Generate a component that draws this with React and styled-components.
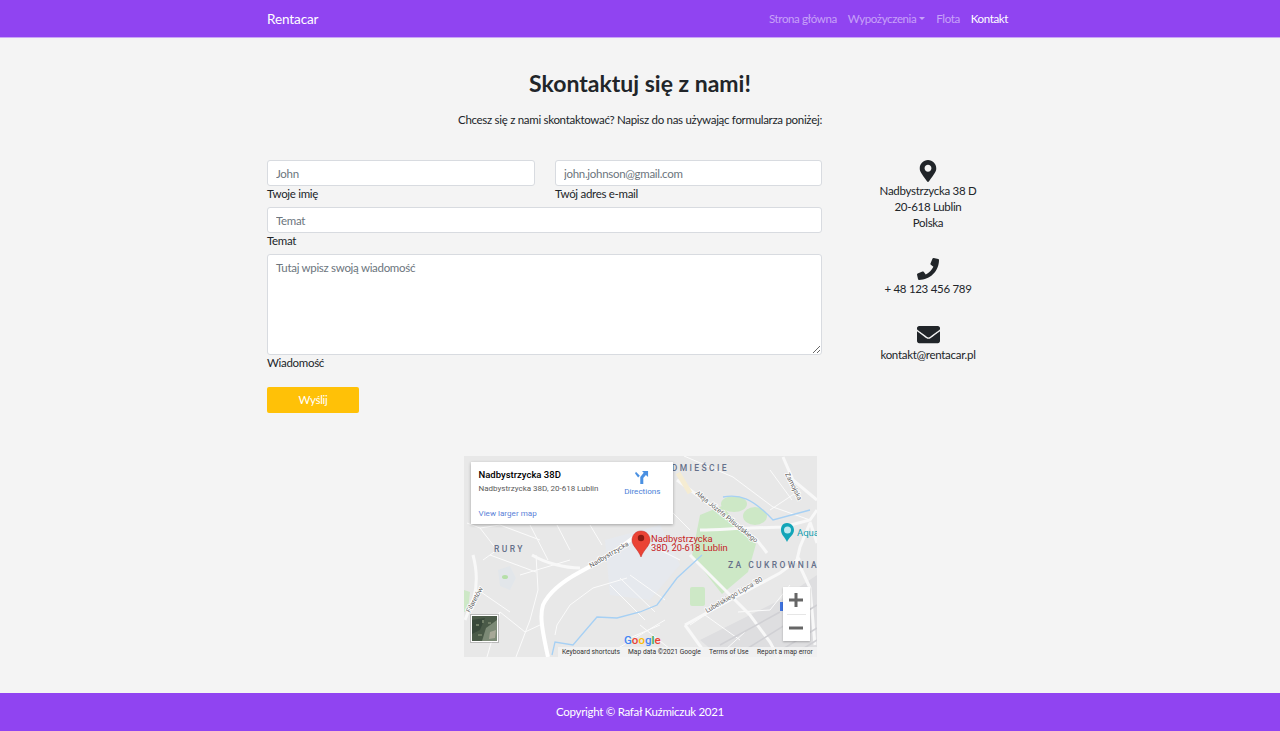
import React from 'react';
import styled, { createGlobalStyle } from 'styled-components';
import { FaMapMarkerAlt, FaPhone, FaEnvelope } from 'react-icons/fa';

const purple = '#9044f1';

const Global = createGlobalStyle`
  * { box-sizing: border-box; }
  body {
    margin: 0;
    background: #f4f4f4;
    color: #212529;
    font-family: Lato, "Open Sans", sans-serif;
    font-size: 11.5px;
    letter-spacing: -0.3px;
    line-height: 16px;
  }
`;

const MapDrawing = () => (
  <svg width="353" height="201" viewBox="464 456 353 201" style={{ display: 'block', letterSpacing: 0 }}>
    <rect x="464" y="456" width="353" height="201" fill="#e8e8e8" />
    <path d="M605 540 L660 525 L680 565 L650 600 L610 595 Z" fill="#e6e9ee" />
    <path d="M700 640 L780 600 L817 575 L817 657 L720 657 Z" fill="#dedee0" />
    <path d="M700 515 L722 506 L756 544 L748 572 L722 594 L692 556 Z" fill="#cde8c6" />
    <ellipse cx="734" cy="504" rx="13" ry="8" fill="#cde8c6" />
    <ellipse cx="755" cy="516" rx="12" ry="9" fill="#cde8c6" />
    <rect x="690" y="587" width="15" height="19" rx="2" fill="#cde8c6" />
    <path d="M464 590 L470 592 L468 610 L464 612 Z" fill="#cde8c6" />
    <path d="M498 570 L510 566 L516 578 L510 590 L500 586 Z" fill="#e2e6ea" />
    <ellipse cx="505" cy="577" rx="3" ry="2" fill="#b5dfa8" />

    <g fill="none" stroke="#fbfbfb" strokeWidth="1">
      <path d="M467 523 L480 528 L497 550 L483 560 M480 528 L500 525 L540 540 M557 525 L570 550 M530 525 L548 560 M590 525 L602 545" />
      <path d="M490 555 L536 572 M520 575 L570 560 M536 555 L538 590 L530 620 L516 657 M487 657 L500 612 L525 632 L540 625" />
      <path d="M478 590 L510 612 M500 612 L485 630 M627 578 L593 588 L570 605 L557 625 L555 635" />
      <path d="M610 585 L645 620 M620 578 L655 612 M630 575 L665 600 M640 625 L680 657 M625 640 L660 625 M615 650 L665 620" />
      <path d="M733 477 L773 507 L810 520 M690 625 L705 615 L740 640 M725 650 L745 632 M738 612 L770 610 L790 585" />
      <path d="M770 470 L792 500 M800 490 L770 510 M684 456 L733 477 M660 500 L690 530 M640 540 L680 560" />
    </g>
    <g fill="none" stroke="#f8f8f8" strokeWidth="3">
      <path d="M473 555 C477 570 478 582 474 597 L465 620" />
      <path d="M532 555 C545 563 565 568 580 568" />
      <path d="M685 625 L730 600 L780 573 L800 558" />
      <path d="M677 480 L757 540 L767 553" />
      <path d="M690 555 L737 602 L750 615 L770 642 L778 657" />
      <path d="M685 625 L703 650" />
      <path d="M700 530 C720 530 735 528 750 528 L783 527 L810 520 L817 510" />
      <path d="M783 457 L793 480 L817 500" />
      <path d="M810 523 L800 547 L797 560 L810 588 L815 645 M810 522 L817 543" />
    </g>
    <path d="M678 473 L690 493" fill="none" stroke="#f5ecd2" strokeWidth="5" />
    <path d="M637 535 L607 557 L580 572 C565 580 550 590 543 605 C540 615 541 625 548 657" fill="none" stroke="#fff" strokeWidth="4" />
    <path d="M720 645 L780 612 M745 650 L817 605 M770 657 L817 628 M790 657 L817 640" fill="none" stroke="#d0d0d4" strokeWidth="1.5" />
    <path d="M552 655 L555 642 L573 645 L597 617 L617 618 L640 612 L657 605 L677 578 L702 555 M723 497 C740 494 752 498 773 520 L810 510"
      fill="none" stroke="#a6d0f4" strokeWidth="1.3" />
    <rect x="780" y="602" width="4" height="9" fill="#3f73e0" />

    <g fontFamily="Roboto, sans-serif" fill="#65708a" fontWeight="500">
      <text x="494" y="552" fontSize="8.5" letterSpacing="2.4">RURY</text>
      <text x="728" y="568" fontSize="8.5" letterSpacing="2.4">ZA CUKROWNIA</text>
      <text x="729" y="471" fontSize="8.5" letterSpacing="2.4" textAnchor="end">ŚRÓDMIEŚCIE</text>
    </g>
    <g fontFamily="Roboto, sans-serif" fontSize="6.8" fill="#5f5f5f" stroke="#fff" strokeWidth="1.6" paintOrder="stroke">
      <text transform="translate(591 568) rotate(-31)">Nadbystrzycka</text>
      <text transform="translate(695 494) rotate(39)">Aleja Józefa Piłsudskiego</text>
      <text transform="translate(785 474) rotate(64)">Zamojska</text>
      <text transform="translate(707 613) rotate(-30)">Lubelskiego Lipca '80</text>
      <text transform="translate(470 613) rotate(-62)">Filaretów</text>
    </g>

    <path d="M641 531 C635 531 632 536 632 540 C632 546 638 549 641 557 C644 549 650 546 650 540 C650 536 647 531 641 531 Z" fill="#ea4335" stroke="#c5221f" strokeWidth=".5" />
    <circle cx="641" cy="538" r="3.2" fill="#8a1a12" />
    <g fontFamily="Roboto, sans-serif" fontSize="9.4" fill="#c5221f">
      <text x="651" y="541.500">Nadbystrzycka</text>
      <text x="651" y="551">38D, 20-618 Lublin</text>
    </g>

    <path d="M787 523 C782 523 781 527 781 530 C781 535 785 537 787 542 C789 537 794 535 794 530 C794 527 792 523 787 523 Z" fill="#12a5b8" />
    <circle cx="787.500" cy="530" r="3.500" fill="#bfeaf0" />
    <text x="797" y="536" fontFamily="Roboto, sans-serif" fontSize="9.500" fill="#129eb0">Aqua</text>

    <rect x="470" y="614" width="29" height="29" fill="#000" fillOpacity=".2" />
    <rect x="471" y="615" width="27" height="27" fill="#fff" />
    <rect x="472" y="616" width="25" height="25" fill="#4a5a48" />
    <path d="M472 620 L485 618 L480 630 L472 634 Z" fill="#38483a" />
    <path d="M486 628 L497 620 L497 641 L482 641 Z" fill="#7c8a76" />
    <path d="M490 632 L496 630 L495 638 L489 639 Z" fill="#a7a897" />
    <path d="M476 624 h3 v2 h-3 z M482 620 h2 v3 h-2 z M478 634 h4 v2 h-4 z M488 622 h3 v2 h-3 z" fill="#6f7d66" />

    <text x="624" y="644" fontFamily="Roboto, sans-serif" fontSize="11.500" fontWeight="500">
      <tspan fill="#4285f4">G</tspan><tspan fill="#ea4335">o</tspan><tspan fill="#fbbc05">o</tspan><tspan fill="#4285f4">g</tspan><tspan fill="#34a853">l</tspan><tspan fill="#ea4335">e</tspan>
    </text>

    <rect x="558" y="647" width="259" height="10" fill="#f3f3f3" fillOpacity=".85" />
    <g fontFamily="Roboto, sans-serif" fontSize="6.700" fill="#333">
      <text x="562" y="654">Keyboard shortcuts</text>
      <text x="628" y="654">Map data ©2021 Google</text>
      <text x="709" y="654">Terms of Use</text>
      <text x="757" y="654">Report a map error</text>
    </g>
  </svg>
);

const App = () => {
  return (
    <>
      <Global />
      <Navbar>
        <NavInner>
          <Brand>Rentacar</Brand>
          <NavLinks>
            <NavLink>Strona główna</NavLink>
            <NavLink>Wypożyczenia<Caret /></NavLink>
            <NavLink>Flota</NavLink>
            <NavLink $active>Kontakt</NavLink>
          </NavLinks>
        </NavInner>
      </Navbar>

      <Main>
        <Title>Skontaktuj się z nami!</Title>
        <Lead>Chcesz się z nami skontaktować? Napisz do nas używając formularza poniżej:</Lead>

        <Contact>
          <Form>
            <TwoCols>
              <Field>
                <Input placeholder="John" />
                <Label>Twoje imię</Label>
              </Field>
              <Field>
                <Input placeholder="john.johnson@gmail.com" />
                <Label>Twój adres e-mail</Label>
              </Field>
            </TwoCols>
            <Field>
              <Input placeholder="Temat" />
              <Label>Temat</Label>
            </Field>
            <Field>
              <Textarea placeholder="Tutaj wpisz swoją wiadomość" />
              <Label>Wiadomość</Label>
            </Field>
            <SendButton>Wyślij</SendButton>
          </Form>

          <Info>
            <InfoBlock>
              <FaMapMarkerAlt size={22} />
              <span>Nadbystrzycka 38 D</span>
              <span>20-618 Lublin</span>
              <span>Polska</span>
            </InfoBlock>
            <InfoBlock>
              <FaPhone size={22} />
              <span>+ 48 123 456 789</span>
            </InfoBlock>
            <MailBlock>
              <FaEnvelope size={23} />
              <span>kontakt@rentacar.pl</span>
            </MailBlock>
          </Info>
        </Contact>

        <MapFrame>
          <MapDrawing />
          <PlaceCard>
            <PlaceName>Nadbystrzycka 38D</PlaceName>
            <PlaceAddress>Nadbystrzycka 38D, 20-618 Lublin</PlaceAddress>
            <LargerMap>View larger map</LargerMap>
            <Directions>
              <svg width="14" height="13" viewBox="0 0 16 15">
                <path d="M8 0 L15 0 L15 7 L12.500 4.500 L9.500 8 L9.500 15 L6 15 L6 7 L10 2 Z M1 1 L5.500 5.500 L3.500 7.500 L0 3 Z" fill="#4a90e2" />
              </svg>
              Directions
            </Directions>
          </PlaceCard>
          <Zoom>
            <ZoomButton>
              <svg width="14" height="14" viewBox="0 0 14 14"><path d="M0 7 H14 M7 0 V14" stroke="#666" strokeWidth="3" /></svg>
            </ZoomButton>
            <ZoomDivider />
            <ZoomButton>
              <svg width="14" height="14" viewBox="0 0 14 14"><path d="M0 7 H14" stroke="#666" strokeWidth="3" /></svg>
            </ZoomButton>
          </Zoom>
        </MapFrame>
      </Main>

      <Footer>Copyright © Rafał Kuźmiczuk 2021</Footer>
    </>
  );
};

export default App;

const Navbar = styled.nav`
  height: 38px;
  background: ${purple};
  border-bottom: 1px solid #c9a6f6;
`;

const NavInner = styled.div`
  width: 741px;
  height: 37px;
  margin-left: 267px;
  display: flex;
  align-items: center;
  justify-content: space-between;
`;

const Brand = styled.a`
  color: #fff;
  font-size: 13.5px;
  letter-spacing: -0.1px;
`;

const NavLinks = styled.div`
  display: flex;
  gap: 11px;
  letter-spacing: -0.38px;
`;

const NavLink = styled.a`
  display: flex;
  align-items: center;
  color: ${({ $active }) => ($active ? '#fff' : 'rgba(255, 255, 255, 0.5)')};
`;

const Caret = styled.i`
  margin-left: 3px;
  border-top: 3.5px solid rgba(255, 255, 255, 0.5);
  border-left: 3.5px solid transparent;
  border-right: 3.5px solid transparent;
`;

const Main = styled.main`
  height: 655px;
  padding-top: 31px;
  display: flex;
  flex-direction: column;
  align-items: center;
`;

const Title = styled.h1`
  margin: 0;
  font-size: 23px;
  line-height: 28px;
  font-weight: 700;
  letter-spacing: 0;
`;

const Lead = styled.p`
  margin: 15px 0 0;
`;

const Contact = styled.section`
  width: 741px;
  margin: 32px 0 0 -5px;
  display: flex;
  justify-content: space-between;
`;

const Form = styled.form`
  width: 555px;
  display: flex;
  flex-direction: column;
  gap: 6px;
`;

const TwoCols = styled.div`
  display: grid;
  grid-template-columns: 268px 267px;
  gap: 20px;
`;

const Field = styled.label`
  display: flex;
  flex-direction: column;
`;

const Input = styled.input`
  height: 26px;
  padding: 0 8px;
  border: 1px solid #d8dbe0;
  border-radius: 3px;
  background: #fff;
  font: inherit;
  letter-spacing: inherit;
  &::placeholder { color: #6c757d; }
`;

const Textarea = styled.textarea`
  height: 101px;
  padding: 5px 8px;
  border: 1px solid #d8dbe0;
  border-radius: 3px;
  background: #fff;
  font: inherit;
  letter-spacing: inherit;
  &::placeholder { color: #6c757d; }
`;

const Label = styled.span`
  height: 15px;
`;

const SendButton = styled.button`
  width: 92px;
  height: 26px;
  margin-top: 11px;
  border: 0;
  border-radius: 2px;
  background: #ffc107;
  color: #fff;
  font: inherit;
  letter-spacing: inherit;
`;

const Info = styled.aside`
  width: 160px;
  display: flex;
  flex-direction: column;
  gap: 27px;
`;

const InfoBlock = styled.div`
  display: flex;
  flex-direction: column;
  align-items: center;
  text-align: center;
  svg { margin-bottom: 1px; }
`;

const MailBlock = styled(InfoBlock)`
  margin-top: -1px;
`;

const MapFrame = styled.div`
  position: relative;
  width: 353px;
  height: 201px;
  margin-top: 43px;
  letter-spacing: 0;
`;

const PlaceCard = styled.div`
  position: absolute;
  top: 6px;
  left: 7px;
  width: 202px;
  height: 62px;
  padding: 7px 8px;
  background: #fff;
  box-shadow: 0 1px 3px rgba(0, 0, 0, 0.3);
  font-family: Roboto, sans-serif;
`;

const PlaceName = styled.div`
  font-size: 9.5px;
  line-height: 12px;
  font-weight: 500;
  color: #000;
`;

const PlaceAddress = styled.div`
  margin-top: 3px;
  font-size: 8px;
  line-height: 10px;
  color: #5b5b5b;
`;

const LargerMap = styled.div`
  margin-top: 14px;
  font-size: 8.1px;
  line-height: 10px;
  color: #5b7fd8;
`;

const Directions = styled.div`
  position: absolute;
  top: 9px;
  right: 12px;
  display: flex;
  flex-direction: column;
  align-items: center;
  gap: 2px;
  font-size: 8.1px;
  line-height: 10px;
  color: #4a7fd8;
`;

const Zoom = styled.div`
  position: absolute;
  right: 7px;
  bottom: 16px;
  width: 27px;
  height: 54px;
  background: #fff;
  box-shadow: 0 1px 2px rgba(0, 0, 0, 0.25);
  display: flex;
  flex-direction: column;
`;

const ZoomButton = styled.div`
  flex: 1;
  display: flex;
  align-items: center;
  justify-content: center;
`;

const ZoomDivider = styled.div`
  height: 1px;
  margin: 0 4px;
  background: #e6e6e6;
`;

const Footer = styled.footer`
  height: 38px;
  background: ${purple};
  color: #fff;
  display: flex;
  align-items: center;
  justify-content: center;
`;
